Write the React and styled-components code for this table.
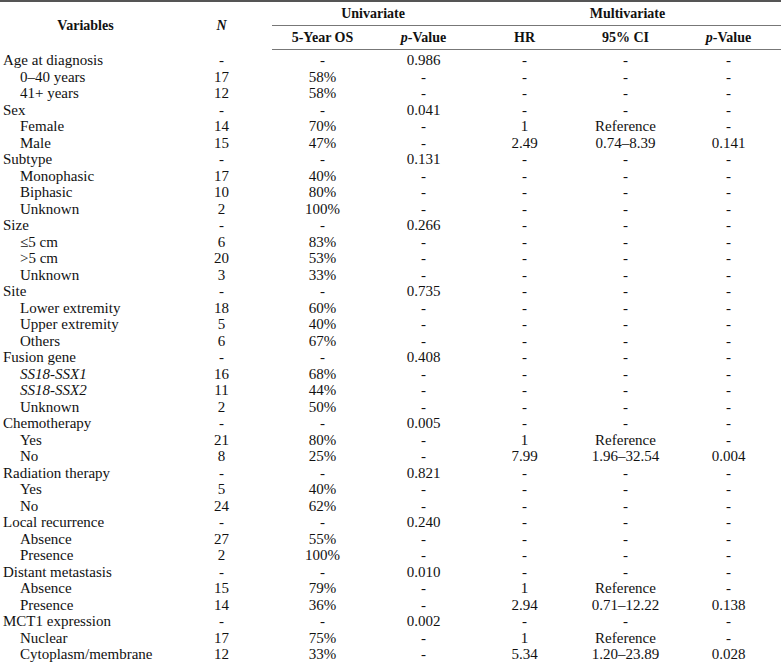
import React from 'react'
import styled, { createGlobalStyle } from 'styled-components'

const GlobalStyle = createGlobalStyle`
  html, body {
    margin: 0;
    padding: 0;
    background: #fff;
  }
`

const Table = styled.table`
  width: 781px;
  table-layout: fixed;
  border-collapse: collapse;
  font-family: "Liberation Serif", "DejaVu Serif", serif;
  font-size: 15px;
  color: #111;
  border-top: 2px solid #555;
  border-bottom: 2px solid #222;
`

const HeadCell = styled.th`
  font-weight: bold;
  text-align: center;
  height: 23px;
  padding: 0;
  line-height: 23px;
  font-size: 14px;
  border-bottom: ${props => props.rule ? '1px solid #777' : 'none'};
`

const HeadRow = styled.tr`
  &:last-child th {
    border-bottom: 1px solid #777;
  }
`

const Row = styled.tr`
  height: 16.5px;
  &:first-child td {
    padding-top: 2px;
  }
  &:last-child td {
    padding-bottom: 3px;
  }
`

const Label = styled.td`
  padding: 0 0 0 ${props => props.sub ? '20px' : '3px'};
  line-height: 16.5px;
  white-space: nowrap;
  font-style: ${props => props.italic ? 'italic' : 'normal'};
`

const Cell = styled.td`
  padding: 0;
  text-align: center;
  line-height: 16.5px;
  white-space: nowrap;
`

const rows = [
  ['Age at diagnosis', 0, '-', '-', '0.986', '-', '-', '-'],
  ['0–40 years', 1, '17', '58%', '-', '-', '-', '-'],
  ['41+ years', 1, '12', '58%', '-', '-', '-', '-'],
  ['Sex', 0, '-', '-', '0.041', '-', '-', '-'],
  ['Female', 1, '14', '70%', '-', '1', 'Reference', '-'],
  ['Male', 1, '15', '47%', '-', '2.49', '0.74–8.39', '0.141'],
  ['Subtype', 0, '-', '-', '0.131', '-', '-', '-'],
  ['Monophasic', 1, '17', '40%', '-', '-', '-', '-'],
  ['Biphasic', 1, '10', '80%', '-', '-', '-', '-'],
  ['Unknown', 1, '2', '100%', '-', '-', '-', '-'],
  ['Size', 0, '-', '-', '0.266', '-', '-', '-'],
  ['≤5 cm', 1, '6', '83%', '-', '-', '-', '-'],
  ['>5 cm', 1, '20', '53%', '-', '-', '-', '-'],
  ['Unknown', 1, '3', '33%', '-', '-', '-', '-'],
  ['Site', 0, '-', '-', '0.735', '-', '-', '-'],
  ['Lower extremity', 1, '18', '60%', '-', '-', '-', '-'],
  ['Upper extremity', 1, '5', '40%', '-', '-', '-', '-'],
  ['Others', 1, '6', '67%', '-', '-', '-', '-'],
  ['Fusion gene', 0, '-', '-', '0.408', '-', '-', '-'],
  ['SS18-SSX1', 2, '16', '68%', '-', '-', '-', '-'],
  ['SS18-SSX2', 2, '11', '44%', '-', '-', '-', '-'],
  ['Unknown', 1, '2', '50%', '-', '-', '-', '-'],
  ['Chemotherapy', 0, '-', '-', '0.005', '-', '-', '-'],
  ['Yes', 1, '21', '80%', '-', '1', 'Reference', '-'],
  ['No', 1, '8', '25%', '-', '7.99', '1.96–32.54', '0.004'],
  ['Radiation therapy', 0, '-', '-', '0.821', '-', '-', '-'],
  ['Yes', 1, '5', '40%', '-', '-', '-', '-'],
  ['No', 1, '24', '62%', '-', '-', '-', '-'],
  ['Local recurrence', 0, '-', '-', '0.240', '-', '-', '-'],
  ['Absence', 1, '27', '55%', '-', '-', '-', '-'],
  ['Presence', 1, '2', '100%', '-', '-', '-', '-'],
  ['Distant metastasis', 0, '-', '-', '0.010', '-', '-', '-'],
  ['Absence', 1, '15', '79%', '-', '1', 'Reference', '-'],
  ['Presence', 1, '14', '36%', '-', '2.94', '0.71–12.22', '0.138'],
  ['MCT1 expression', 0, '-', '-', '0.002', '-', '-', '-'],
  ['Nuclear', 1, '17', '75%', '-', '1', 'Reference', '-'],
  ['Cytoplasm/membrane', 1, '12', '33%', '-', '5.34', '1.20–23.89', '0.028'],
]

export default function App() {
  return (
    <>
      <GlobalStyle />
      <Table>
        <colgroup>
          <col style={{ width: 171 }} />
          <col style={{ width: 101 }} />
          <col style={{ width: 101 }} />
          <col style={{ width: 101 }} />
          <col style={{ width: 101 }} />
          <col style={{ width: 101 }} />
          <col style={{ width: 105 }} />
        </colgroup>
        <thead>
          <HeadRow>
            <HeadCell rowSpan={2}>Variables</HeadCell>
            <HeadCell rowSpan={2}><i>N</i></HeadCell>
            <HeadCell colSpan={2} rule>Univariate</HeadCell>
            <HeadCell colSpan={3} rule>Multivariate</HeadCell>
          </HeadRow>
          <HeadRow>
            <HeadCell>5-Year OS</HeadCell>
            <HeadCell><i>p</i>-Value</HeadCell>
            <HeadCell>HR</HeadCell>
            <HeadCell>95% CI</HeadCell>
            <HeadCell><i>p</i>-Value</HeadCell>
          </HeadRow>
        </thead>
        <tbody>
          {rows.map(([label, kind, ...vals], i) => (
            <Row key={i}>
              <Label sub={kind > 0} italic={kind === 2}>{label}</Label>
              {vals.map((v, j) => <Cell key={j}>{v}</Cell>)}
            </Row>
          ))}
        </tbody>
      </Table>
    </>
  )
}
